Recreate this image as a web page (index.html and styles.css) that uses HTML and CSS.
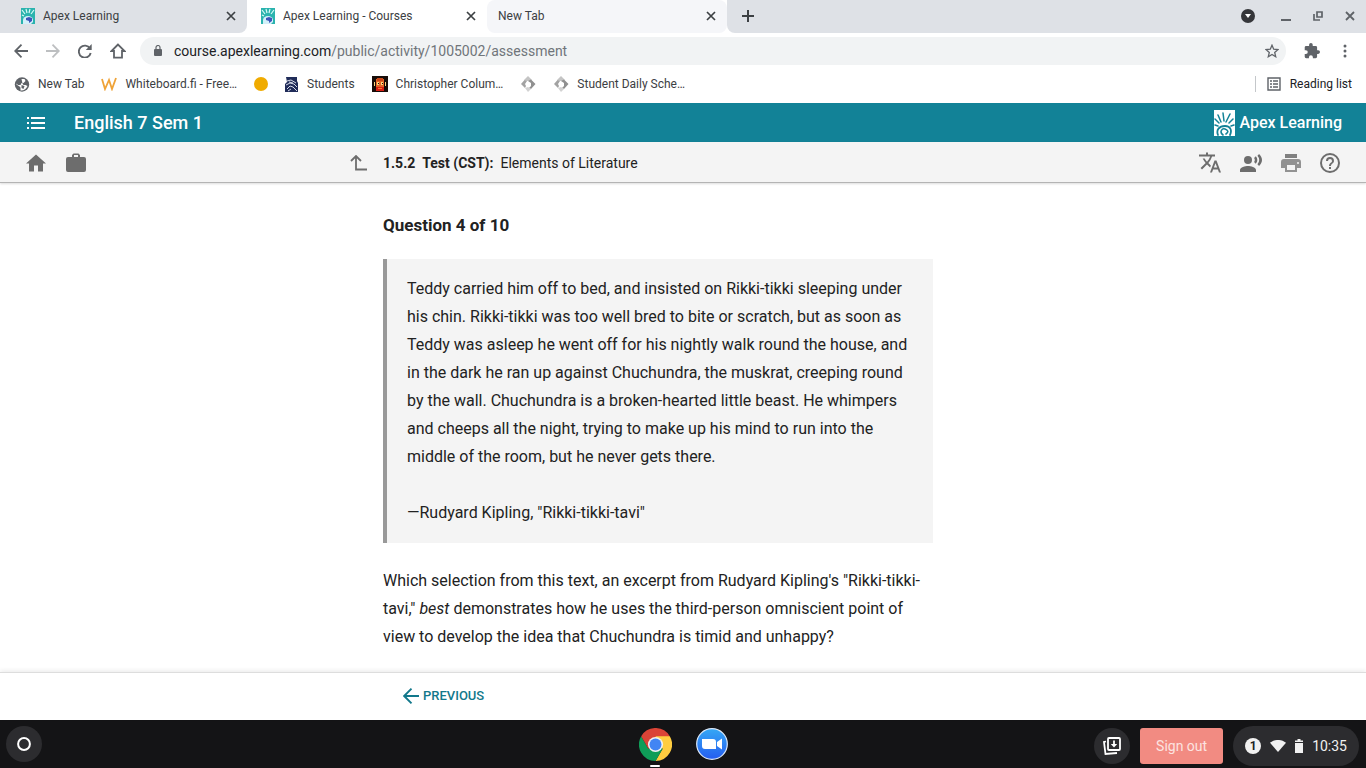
FILE: index.html
```html
<!DOCTYPE html>
<html lang="en">
<head>
<meta charset="utf-8">
<meta name="viewport" content="width=device-width, initial-scale=1">
<title>Apex Learning - Courses</title>
<link rel="stylesheet" href="styles.css">
</head>
<body>
<svg class="defs" aria-hidden="true">
  <symbol id="apex-tab" viewBox="0 0 14 16">
    <rect width="14" height="16" fill="#2bb3ae"/>
    <path d="M1 2l3 4M5 1l1 4M9 1L8 5M13 2l-3 4M1 7l2 1" stroke="#d8fbf7" stroke-width="1.2"/>
    <path d="M2 16v-4a5 4 0 0 1 10 0v2l-2 2z" fill="#d3f0fa"/>
    <path d="M5 10l3-1 3 1v3l-3 2v-2l-3-1z" fill="#3d55b9"/>
  </symbol>
  <symbol id="close" viewBox="0 0 10 10"><path d="M1 1l8 8M9 1L1 9" fill="none" stroke="#3c4043" stroke-width="1.7"/></symbol>
  <symbol id="diamond" viewBox="0 0 16 16">
    <path d="M8 0l4 4-2 1H6L4 4z" fill="#c4c4c4"/>
    <path d="M4.500 4L1 8l4 4 1-2-1-2 2-3z" fill="#a2a2a2"/>
    <path d="M11 3.500L15.500 8l-4.500 5-2-1 2-2V7L8 5z" fill="#909090"/>
    <path d="M5 12l3-1 3 2-3 3z" fill="#d2d2d2"/>
  </symbol>
</svg>

<header class="browser">
  <nav class="tabs" aria-label="Tabs">
    <div class="tab tab-first">
      <svg class="tab-icon"><use href="#apex-tab"/></svg><span class="tab-title">Apex Learning</span>
      <button class="plain" aria-label="Close tab"><svg class="close"><use href="#close"/></svg></button>
    </div>
    <div class="tab tab-active">
      <svg class="tab-icon"><use href="#apex-tab"/></svg><span class="tab-title">Apex Learning - Courses</span>
      <button class="plain" aria-label="Close tab"><svg class="close"><use href="#close"/></svg></button>
    </div>
    <div class="tab tab-hover">
      <span class="tab-title">New Tab</span>
      <button class="plain" aria-label="Close tab"><svg class="close"><use href="#close"/></svg></button>
    </div>
    <div class="strip">
      <button class="plain" aria-label="New tab"><svg width="12" height="12" viewBox="0 0 12 12"><path d="M6 0v12M0 6h12" stroke="#3c4043" stroke-width="2"/></svg></button>
      <div class="window-buttons">
        <button class="plain" aria-label="Search tabs"><svg width="14" height="14" viewBox="0 0 14 14"><circle cx="7" cy="7" r="7" fill="#35363a"/><path d="M4 5h6L7 9z" fill="#fff"/></svg></button>
        <button class="plain" aria-label="Minimize"><svg width="10" height="10" viewBox="0 0 10 10"><path d="M0 9h10" stroke="#5f6368" stroke-width="2"/></svg></button>
        <button class="plain" aria-label="Restore"><svg width="10" height="10" viewBox="0 0 10 10"><path d="M4 1h5v5H4zM1 3v6h6" fill="none" stroke="#5f6368" stroke-width="1.700"/></svg></button>
        <button class="plain" aria-label="Close"><svg width="10" height="10" viewBox="0 0 10 10"><path d="M1 1l8 8M9 1L1 9" stroke="#5f6368" stroke-width="1.800"/></svg></button>
      </div>
    </div>
  </nav>

  <div class="toolbar">
    <button class="plain" aria-label="Back"><svg width="14" height="14" viewBox="0 0 14 14"><path d="M14 7H1M7.500 .7L1.200 7l6.300 6.300" fill="none" stroke="#5f6368" stroke-width="1.800"/></svg></button>
    <button class="plain" aria-label="Forward"><svg width="14" height="14" viewBox="0 0 14 14"><path d="M0 7h13M6.500 .7L12.800 7l-6.300 6.300" fill="none" stroke="#bdbfc1" stroke-width="1.800"/></svg></button>
    <button class="plain" aria-label="Reload"><svg width="14" height="14" viewBox="0 0 14 14"><path d="M12 4.500A6 6 0 1 0 12.700 9" fill="none" stroke="#5f6368" stroke-width="1.900"/><path d="M13.700 0v6H7.800z" fill="#5f6368"/></svg></button>
    <button class="plain" aria-label="Home"><svg width="16" height="16" viewBox="0 0 16 16"><path d="M8 1.500L1.500 8H4v6.700h8V8h2.500z" fill="none" stroke="#5f6368" stroke-width="1.800"/></svg></button>
    <div class="address">
      <svg width="8" height="11" viewBox="0 0 8 11"><rect y="4" width="8" height="7" rx="1" fill="#5f6368"/><path d="M2 4V2.500a2 2 0 0 1 4 0V4" fill="none" stroke="#5f6368" stroke-width="1.200"/></svg>
      <span class="url">course.apexlearning.com<span class="path">/public/activity/1005002/assessment</span></span>
      <button class="plain" aria-label="Bookmark this page"><svg width="14" height="14" viewBox="0 0 14 14"><path d="M7 1.200l1.700 4 4.300.4-3.300 2.800 1 4.300L7 10.400l-3.700 2.300 1-4.300L1 5.600l4.300-.4z" fill="none" stroke="#5f6368" stroke-width="1.300"/></svg></button>
    </div>
    <button class="plain" aria-label="Extensions"><svg width="16" height="16" viewBox="1 1 22 22"><path fill="#5f6368" d="M20.500 11H19V7a2 2 0 0 0-2-2h-4V3.500a2.500 2.500 0 0 0-5 0V5H4a2 2 0 0 0-2 2v3.800h1.500a2.700 2.700 0 0 1 0 5.400H2V20a2 2 0 0 0 2 2h3.800v-1.500a2.700 2.700 0 0 1 5.400 0V22H17a2 2 0 0 0 2-2v-4h1.500a2.500 2.500 0 0 0 0-5z"/></svg></button>
    <button class="plain" aria-label="Menu"><svg width="14" height="14" viewBox="0 0 14 14"><g fill="#5f6368"><circle cx="7" cy="2" r="1.500"/><circle cx="7" cy="7" r="1.500"/><circle cx="7" cy="12" r="1.500"/></g></svg></button>
  </div>

  <nav class="bookmarks" aria-label="Bookmarks">
    <a href="#"><svg width="16" height="15" viewBox="0 0 15 15"><circle cx="7.500" cy="7.500" r="7.200" fill="#5f6368"/><path d="M7 2h3l1 2-2 2H7L6 8H3.500L2 6.500v1l3 2 1 1v3C9 14 12 12 13 9l-2-1H9L8 6.500" fill="#fff"/><path d="M7 8l3 1-1 3-2-1z" fill="#5f6368"/></svg>New Tab</a>
    <a href="#"><svg width="16" height="14" viewBox="0 0 16 14"><path d="M1 2l3 10 4-9 3 9 4-11" fill="none" stroke="#efa338" stroke-width="1.800"/></svg>Whiteboard.fi - Free…</a>
    <a href="#" aria-label="Bookmark"><svg width="14" height="14" viewBox="0 0 14 14"><circle cx="7" cy="7" r="7" fill="#f0ab00"/></svg></a>
    <a href="#"><svg width="14" height="15" viewBox="0 0 14 15"><path d="M1 0h11v4l1 2v9H0V7l2-2z" fill="#202c59"/><path d="M2 4l4-1 5 3M4 5l4 1M1 8l4-2 4 1 3 3M2 12l3-3 3 1 4 4M3 14l3-2" fill="none" stroke="#d6dbe8"/></svg>Students</a>
    <a href="#"><svg width="16" height="16" viewBox="0 0 16 16" shape-rendering="crispEdges"><rect width="16" height="16" fill="#180c08"/><path d="M4 3h8v8H4z" fill="#e46325"/><path d="M5 2h6v3H5z" fill="#c94818"/><path d="M5 6h2v3H5zM9 6h2v3H9zM2 6h1v4H2zM13 6h1v4h-1z" fill="#ffd37a"/><path d="M6 7h1v1H6zM10 7h1v1h-1z" fill="#180c08"/><path d="M4 11h8v4H4z" fill="#d81d12"/><path d="M6 12h4v1H6z" fill="#ff7a2d"/></svg>Christopher Colum…</a>
    <a href="#" aria-label="Bookmark"><svg width="16" height="16"><use href="#diamond"/></svg></a>
    <a href="#"><svg width="16" height="16"><use href="#diamond"/></svg>Student Daily Sche…</a>
    <button class="plain reading"><svg width="14" height="14" viewBox="0 0 14 14"><path d="M1 1h12v12H1z" fill="none" stroke="#5f6368" stroke-width="1.400"/><path d="M3 4h2M6 4h5M3 7h2M6 7h5M3 10h2M6 10h5" stroke="#5f6368" stroke-width="1.400"/></svg>Reading list</button>
  </nav>
</header>

<div class="course-bar">
  <button class="plain" aria-label="Course menu"><svg width="18" height="12" viewBox="0 0 18 12"><path d="M0 1h2M4 1h14M0 6h2M4 6h14M0 11h2M4 11h14" stroke="#fff" stroke-width="2"/></svg></button>
  <h1>English 7 Sem 1</h1>
  <a class="brand" href="#">
    <svg width="21" height="26" viewBox="0 0 21 26"><rect width="21" height="26" fill="#fff"/><g fill="none" stroke="#128297" stroke-linecap="round"><path d="M9 3l1 8M4 5l3 7M16 4l-4 8M1 9l4 4M19 9l-4 4M1 15l3 1M20 15l-3 1" stroke-width="1.500"/><path d="M4 25c-2-5 1-9 7-9s7 5 5 9" stroke-width="1.800"/><path d="M9 25c-4-3-1-7 2-6s4 3 1 5" stroke-width="1.600"/></g></svg>
    <span>Apex Learning</span>
  </a>
</div>

<div class="activity-bar">
  <div class="tools-left">
    <button class="plain" aria-label="Home"><svg width="20" height="18" viewBox="2 3 20 17"><path fill="#6d6d6d" d="M10 20v-6h4v6h5v-8h3L12 3 2 12h3v8z"/></svg></button>
    <button class="plain" aria-label="Portfolio"><svg width="20" height="20" viewBox="0 0 20 20"><path fill="#6d6d6d" fill-rule="evenodd" d="M18 4h-4V2l-1.500-1.500h-5L6 2v2H2a2 2 0 0 0-2 2v11a2 2 0 0 0 2 2h16a2 2 0 0 0 2-2V6a2 2 0 0 0-2-2zM8 2h4v2H8z"/></svg></button>
  </div>
  <div class="activity">
    <button class="plain up" aria-label="Up a level"><svg width="18" height="16" viewBox="0 0 18 16"><path d="M6 1v13.500h11M1 6l5-5 5 5" fill="none" stroke="#6d6d6d" stroke-width="1.800"/></svg></button>
    <h2><b>1.5.2</b><b>Test (CST):</b><span>Elements of Literature</span></h2>
  </div>
  <div class="tools-right">
    <button class="plain" aria-label="Translate"><svg width="22" height="21" viewBox="1 2 22 20"><path fill="#6d6d6d" d="M12.870 15.070l-2.540-2.510.03-.03A17.520 17.520 0 0 0 14.070 6H17V4h-7V2H8v2H1v2h11.170C11.500 7.920 10.440 9.750 9 11.350 8.070 10.320 7.300 9.190 6.690 8h-2c.73 1.630 1.730 3.170 2.980 4.560l-5.090 5.020L4 19l5-5 3.110 3.110zM18.500 10h-2L12 22h2l1.120-3h4.750L21 22h2zm-2.620 7l1.620-4.330L19.120 17z"/></svg></button>
    <button class="plain" aria-label="Read aloud"><svg width="22" height="18" viewBox="1 3 22 18"><g fill="#6d6d6d"><circle cx="9" cy="9" r="4"/><path d="M9 15c-2.670 0-8 1.340-8 4v2h16v-2c0-2.660-5.330-4-8-4zM16.760 5.360l-1.680 1.690a3.200 3.200 0 0 1 0 3.890l1.680 1.690c2.020-2.020 2.020-5.070 0-7.270zM20.070 3l-1.630 1.630a6.300 6.300 0 0 1 0 8.740L20.070 15c3.900-3.890 3.910-8.050 0-12z"/></g></svg></button>
    <button class="plain" aria-label="Print"><svg width="20" height="18" viewBox="2 3 20 18"><path fill="#929292" d="M19 8H5a3 3 0 0 0-3 3v6h4v4h12v-4h4v-6a3 3 0 0 0-3-3z"/><path fill="#808080" d="M6 3h12v4H6z"/><path fill="#f4f4f4" d="M8 14h8v5H8z"/><circle cx="19" cy="12" r="1" fill="#f4f4f4"/></svg></button>
    <button class="plain" aria-label="Help"><svg width="20" height="20" viewBox="2 2 20 20"><path fill="#6d6d6d" d="M11 18h2v-2h-2zm1-16a10 10 0 1 0 0 20 10 10 0 0 0 0-20zm0 18a8 8 0 1 1 0-16 8 8 0 0 1 0 16zm0-14a4 4 0 0 0-4 4h2a2 2 0 1 1 4 0c0 2-3 1.750-3 5h2c0-2.250 3-2.500 3-5a4 4 0 0 0-4-4z"/></svg></button>
  </div>
</div>

<main class="page">
  <article class="question">
    <h3>Question 4 of 10</h3>
    <blockquote>
      <p>Teddy carried him off to bed, and insisted on Rikki-tikki sleeping under his chin. Rikki-tikki was too well bred to bite or scratch, but as soon as Teddy was asleep he went off for his nightly walk round the house, and in the dark he ran up against Chuchundra, the muskrat, creeping round by the wall. Chuchundra is a broken-hearted little beast. He whimpers and cheeps all the night, trying to make up his mind to run into the middle of the room, but he never gets there.</p>
      <p>—Rudyard Kipling, "Rikki-tikki-tavi"</p>
    </blockquote>
    <p>Which selection from this text, an excerpt from Rudyard Kipling's "Rikki-tikki-tavi," <em>best</em> demonstrates how he uses the third-person omniscient point of view to develop the idea that Chuchundra is timid and unhappy?</p>
  </article>
</main>

<footer class="pager">
  <button class="plain previous"><svg width="16" height="16" viewBox="0 0 16 16"><path d="M16 8H1M8.500 .7L1.200 8l7.300 7.300" fill="none" stroke="#12788b" stroke-width="1.900"/></svg>PREVIOUS</button>
</footer>

<div class="shelf">
  <div class="shelf-start">
    <button class="plain round" aria-label="Launcher"><svg width="14" height="14" viewBox="0 0 14 14"><circle cx="7" cy="7" r="5.900" fill="none" stroke="#fff" stroke-width="2"/></svg></button>
  </div>
  <div class="apps">
    <button class="plain chrome" aria-label="Chrome"><svg width="33" height="33" viewBox="0 0 48 48"><path d="M24 24L3.200 12A24 24 0 0 1 44.800 12z" fill="#db4437"/><path d="M24 24V12h20.800A24 24 0 0 1 24 48L34.400 30z" fill="#ffcd40"/><path d="M24 24l10.400 6L24 48A24 24 0 0 1 3.200 12l10.400 18z" fill="#0f9d58"/><path d="M3.200 12L13.600 30 24 24V12z" fill="#db4437"/><circle cx="24" cy="24" r="11" fill="#f1f1f1"/><circle cx="24" cy="24" r="8.700" fill="#4285f4"/></svg></button>
    <button class="plain" aria-label="Zoom"><svg width="32" height="32" viewBox="0 0 32 32"><defs><linearGradient id="zoom-blue" x2="0" y2="1"><stop stop-color="#35a8f5"/><stop offset="1" stop-color="#255df0"/></linearGradient></defs><circle cx="16" cy="16" r="15.300" fill="url(#zoom-blue)" stroke="#dce9fa" stroke-width="1.200"/><path d="M6 11h11a3 3 0 0 1 3 3v7H9a3 3 0 0 1-3-3zM21 14l5-3.500v11L21 18z" fill="#fff"/></svg></button>
  </div>
  <div class="status">
    <button class="plain round" aria-label="Holding space"><svg width="18" height="18" viewBox="0 0 18 18"><g fill="none" stroke="#fff" stroke-width="1.800"><rect x="5" y="1" width="12" height="12" rx="1"/><path d="M3 4.500L1 5l1.500 12 11.500-1"/></g><path d="M11 3.500V8" stroke="#fff" stroke-width="1.800"/><path d="M7.800 7h6.400L11 10.500z" fill="#fff"/></svg></button>
    <button class="plain signout">Sign out</button>
    <button class="plain tray">
      <span class="count">1</span>
      <svg width="16" height="12" viewBox="0 0 16 12"><path d="M0 2.800C5-1 11-1 16 2.800L8 12z" fill="#f1f1f1"/></svg>
      <svg width="8" height="14" viewBox="0 0 8 14"><path d="M2.500 0h3v1.500H8V3H0V1.500h2.500zM0 4h8v10H0z" fill="#f1f1f1"/></svg>
      <span>10:35</span>
    </button>
  </div>
</div>
</body>
</html>
```
FILE: styles.css
```css
* { box-sizing: border-box; }
:root { --column-start: calc(50% - 300px); }
body {
  margin: 0;
  height: 100vh;
  display: flex;
  flex-direction: column;
  overflow: hidden;
  background: #fff;
  color: #222;
  font-family: Roboto, "Liberation Sans", sans-serif;
}
h1, h2, h3, p, blockquote { margin: 0; }
svg { display: block; flex: none; }
a { color: inherit; text-decoration: none; }
.defs { position: absolute; width: 0; height: 0; }
.plain {
  display: flex;
  align-items: center;
  justify-content: center;
  padding: 0;
  border: 0;
  background: none;
  color: inherit;
  font: inherit;
  cursor: pointer;
}

/* Browser frame */
.browser { flex: none; font-size: 12px; color: #3c4043; }
.tabs { display: flex; height: 33px; background: #fff; }
.tab {
  flex: 0 1 240px;
  display: flex;
  align-items: center;
  gap: 8px;
  padding: 0 11px 2px 14px;
}
.tab-first { flex-basis: 247px; padding-left: 21px; background: #dee1e6; border-radius: 0 0 8px 0; }
.tab-active { background: #fff; }
.tab-hover { padding-left: 11px; background: #f5f6f9; border-radius: 8px; }
.tab-icon { width: 14px; height: 16px; }
.tab-title { flex: 1; white-space: nowrap; overflow: hidden; }
.close { width: 10px; height: 10px; }
.strip {
  flex: 1;
  display: flex;
  align-items: center;
  justify-content: space-between;
  padding: 0 11px 2px 15px;
  background: #dee1e6;
  border-radius: 0 0 0 8px;
}
.window-buttons { display: flex; align-items: center; gap: 22px; }
.window-buttons .plain:first-child { margin-right: 4px; }

.toolbar { display: flex; align-items: center; gap: 18px; height: 37px; padding: 0 14px 2px; }
.address {
  flex: 1;
  display: flex;
  align-items: center;
  height: 28px;
  margin-left: -4px;
  padding: 0 7px 0 14px;
  border-radius: 14px;
  background: #f1f3f4;
  color: #202124;
  font-size: 14px;
}
.url { flex: 1; margin-left: 12px; }
.path { color: #70757a; }

.bookmarks { display: flex; align-items: center; gap: 17px; height: 33px; padding: 0 14px 5px; }
.bookmarks a { display: flex; align-items: center; gap: 8px; white-space: nowrap; }
.reading {
  gap: 9px;
  height: 16px;
  margin-left: auto;
  padding-left: 11px;
  border-left: 1px solid #c4c7ca;
  color: #202124;
}

/* Course header */
.course-bar {
  flex: none;
  display: flex;
  align-items: center;
  gap: 29px;
  height: 39px;
  padding: 0 24px 0 27px;
  background: #128297;
  color: #fff;
}
.course-bar h1 { font-size: 18px; font-weight: 500; line-height: 24px; }
.brand {
  display: flex;
  align-items: center;
  gap: 4px;
  margin-left: auto;
  font-size: 16px;
  font-weight: 500;
  line-height: 24px;
}
.activity-bar {
  flex: none;
  position: relative;
  display: grid;
  grid-template-columns: calc(50% - 333px) 1fr auto;
  align-items: center;
  height: 41px;
  padding-top: 1px;
  background: #f4f4f4;
  border-bottom: 1px solid #b4b4b4;
  box-shadow: 0 1px 2px #0002;
}
.tools-left { display: flex; align-items: center; gap: 20px; padding-left: 26px; }
.tools-right { display: flex; align-items: center; gap: 19px; padding-right: 26px; }
.activity { display: flex; align-items: center; gap: 15px; }
.activity h2 { display: flex; gap: 7px; font-size: 14px; font-weight: 400; }

/* Question */
.page { flex: 1; min-height: 0; overflow: hidden; padding: 28px 24px 0 var(--column-start); }
.question { max-width: 550px; font-size: 16px; line-height: 28px; }
.question h3 { margin-bottom: 20px; font-size: 17px; font-weight: 700; }
blockquote {
  margin-bottom: 24px;
  padding: 16px 24px 16px 20px;
  border-left: 4px solid #999;
  background: #f4f4f4;
}
blockquote p + p { margin-top: 28px; }
.pager {
  flex: none;
  position: relative;
  display: flex;
  align-items: center;
  height: 48px;
  padding: 0 24px 2px var(--column-start);
  background: #fff;
  border-top: 1px solid #ddd;
  box-shadow: 0 -2px 4px #0001;
}
.previous { gap: 4px; margin-left: 20px; color: #12788b; font-size: 13px; font-weight: 500; }

/* System shelf */
.shelf {
  flex: none;
  display: grid;
  grid-template-columns: 1fr auto 1fr;
  align-items: center;
  height: 48px;
  background: #141416;
  color: #f1f1f1;
}
.shelf-start { padding-left: 6px; }
.round { width: 36px; height: 36px; border-radius: 50%; background: #2c2c2f; }
.apps { display: flex; align-items: center; gap: 24px; }
.chrome { position: relative; }
.chrome::after {
  content: "";
  position: absolute;
  bottom: -6px;
  width: 10px;
  height: 2px;
  border-radius: 1px;
  background: #fff;
}
.status { display: flex; align-items: center; justify-content: flex-end; gap: 10px; padding: 4px 7px 0 0; }
.signout { width: 83px; height: 36px; border-radius: 3px; background: #f28b82; color: #fce3e0; font-size: 14px; }
.tray { gap: 9px; height: 40px; padding: 0 12px; border-radius: 20px; background: #2c2c2f; font-size: 14px; }
.count {
  width: 16px;
  height: 16px;
  border-radius: 50%;
  background: #f1f1f1;
  color: #202124;
  font-size: 12px;
  font-weight: 700;
  line-height: 16px;
}
```
